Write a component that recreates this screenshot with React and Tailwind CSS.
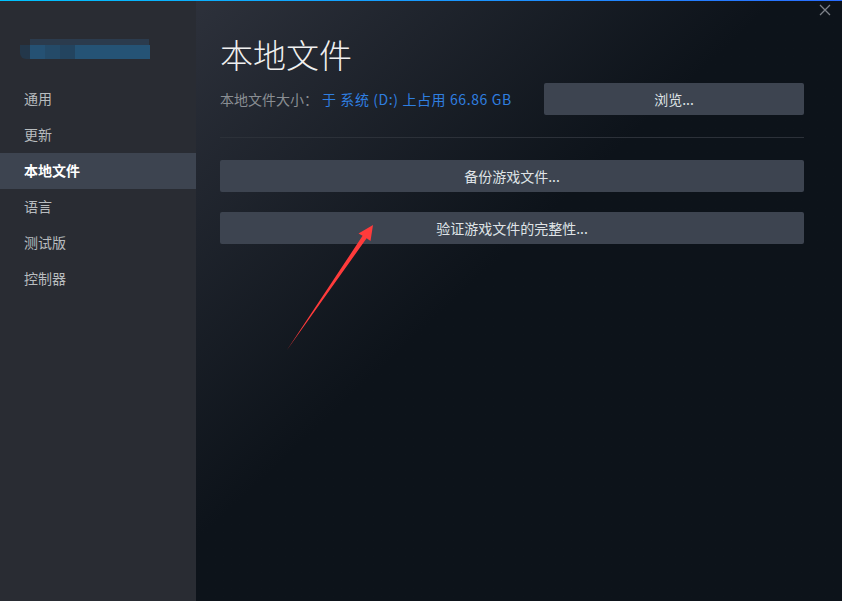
import React from 'react';

const navItems = ['通用', '更新', '本地文件', '语言', '测试版', '控制器'];

const font = { fontFamily: '"Noto Sans CJK SC", "Noto Sans", sans-serif' };

const ActionButton = ({ children, className = '' }) => (
  <button
    className={`h-8 rounded-[2px] bg-[#3d4450] text-[14px] text-[#dfe3e6] ${className}`}
  >
    {children}
  </button>
);

const App = () => {
  const active = '本地文件';

  return (
    <div
      className="relative flex h-[601px] w-[842px] overflow-hidden bg-[#0d131a]"
      style={font}
    >
      {/* sidebar */}
      <aside className="flex w-[196px] shrink-0 flex-col bg-[#292c33]">
        {/* blurred game title */}
        <div className="ml-[20px] mt-[39px] flex h-[20px] w-[130px] flex-col">
          <div className="ml-[10px] h-[6px] w-[119px] bg-[#2b3b4d]" />
          <div className="flex h-[14px]">
            <div className="w-[10px] rounded-bl-[6px] bg-[#23374a]" />
            <div className="w-[15px] bg-[#255173]" />
            <div className="w-[15px] bg-[#244a68]" />
            <div className="w-[15px] bg-[#23445f]" />
            <div className="w-[75px] bg-[#255375]" />
          </div>
        </div>

        <nav className="mt-[22px] flex flex-col">
          {navItems.map((item) => (
            <div
              key={item}
              className={`flex h-9 items-center px-6 pb-px text-[14px] ${
                item === active
                  ? 'bg-[#3d4450] font-bold text-white'
                  : 'text-[#b8bcbf]'
              }`}
            >
              {item}
            </div>
          ))}
        </nav>
      </aside>

      {/* main panel */}
      <main className="relative flex flex-1 flex-col bg-gradient-to-br from-[#2d313b] to-[#0d131a] to-45% pl-6 pr-[38px] pt-[34px]">
        <button className="absolute right-[10px] top-[3px] text-[#7d8289]">
          <svg width="14" height="14" viewBox="0 0 14 14" fill="none">
            <path d="M2 2L12 12M12 2L2 12" stroke="currentColor" strokeWidth="1.3" />
          </svg>
        </button>

        <h1 className="h-10 text-[33px] font-light leading-[40px] text-[#f0f0f0]">本地文件</h1>

        <div className="mt-[9px] flex h-8 items-center">
          <div className="flex-1 text-[14px]">
            <span className="text-[#8a8e93]">本地文件大小：</span>
            <span className="ml-[4px] tracking-[0.6px] text-[#2f7fe0]">于 系统 (D:) 上占用 66.86 GB</span>
          </div>
          <ActionButton className="w-[260px]">浏览...</ActionButton>
        </div>

        <div className="mt-[22px] h-px bg-[#2c3139]" />

        <ActionButton className="mt-[22px] w-full">备份游戏文件...</ActionButton>
        <ActionButton className="mt-5 w-full">验证游戏文件的完整性...</ActionButton>
      </main>

      {/* top accent line */}
      <div className="absolute left-0 right-0 top-0 z-10 h-px bg-gradient-to-r from-[#00c3ff] to-[#2a6dff]" />

      {/* annotation arrow */}
      <svg
        className="pointer-events-none absolute left-0 top-0 z-10"
        width="842"
        height="601"
        viewBox="0 0 842 601"
      >
        <polygon
          points="373,225 370.5,241 366.6,238.3 287,350 362.6,235.8 358.5,233.5"
          fill="#ff3b3b"
        />
      </svg>
    </div>
  );
};

export default App;
